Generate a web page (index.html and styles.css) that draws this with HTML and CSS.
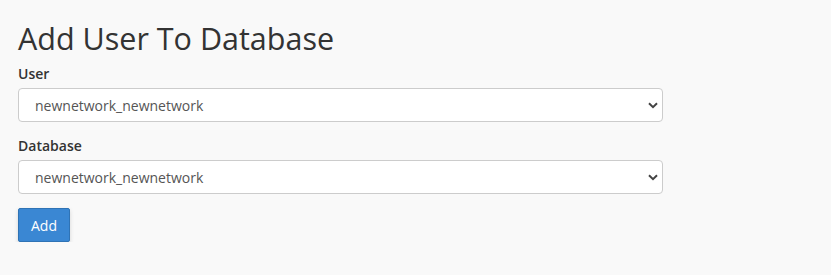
FILE: index.html
```html
<!DOCTYPE html>
<html lang="en">
<head>
  <meta charset="UTF-8">
  <meta name="viewport" content="width=device-width, initial-scale=1.0">
  <title>Add User To Database</title>
  <link rel="stylesheet" href="styles.css">
</head>
<body>
  <div class="page">
    <h1>Add User To Database</h1>
    <form class="add-form" onsubmit="return false">
      <div class="form-group">
        <label for="user">User</label>
        <select id="user" class="form-select">
          <option>newnetwork_newnetwork</option>
        </select>
      </div>
      <div class="form-group">
        <label for="db">Database</label>
        <select id="db" class="form-select">
          <option>newnetwork_newnetwork</option>
        </select>
      </div>
      <button type="submit" class="btn-primary">Add</button>
    </form>
  </div>
</body>
</html>
```

FILE: styles.css
```css
body {
  margin: 0;
  background-color: #f9f9f9;
  font-family: "Open Sans", Arial, sans-serif;
  font-size: 14px;
  color: #333;
}
.page {
  padding: 22px 18px 0;
}
h1 {
  margin: 0 0 9px;
  font-size: 30.5px;
  font-weight: 400;
  line-height: 33px;
  color: #333;
}
.add-form {
  width: 645px;
}
.form-group {
  margin-bottom: 14px;
}
label {
  display: block;
  font-weight: 600;
  line-height: 20px;
  margin-bottom: 4px;
}
.form-select {
  display: block;
  width: 100%;
  height: 34px;
  padding: 0 30px 0 16px;
  font-family: inherit;
  font-size: 14px;
  color: #555;
  background-color: #fff;
  background-image: url("data:image/svg+xml,%3Csvg xmlns='http://www.w3.org/2000/svg' width='10' height='7' viewBox='0 0 10 7'%3E%3Cpath d='M1 1.2 5 5.2 9 1.2' fill='none' stroke='%23444' stroke-width='2'/%3E%3C/svg%3E");
  background-repeat: no-repeat;
  background-position: right 4px center;
  border: 1px solid #ccc;
  border-radius: 4px;
  -webkit-appearance: none;
  appearance: none;
}
.btn-primary {
  height: 34px;
  padding: 0 12px;
  font-family: inherit;
  font-size: 14px;
  color: #fff;
  background-color: #3a87d3;
  border: 1px solid #2f73b5;
  border-radius: 2px;
  box-shadow: 0 2px 4px rgba(0, 0, 0, 0.15);
  cursor: pointer;
}
```
